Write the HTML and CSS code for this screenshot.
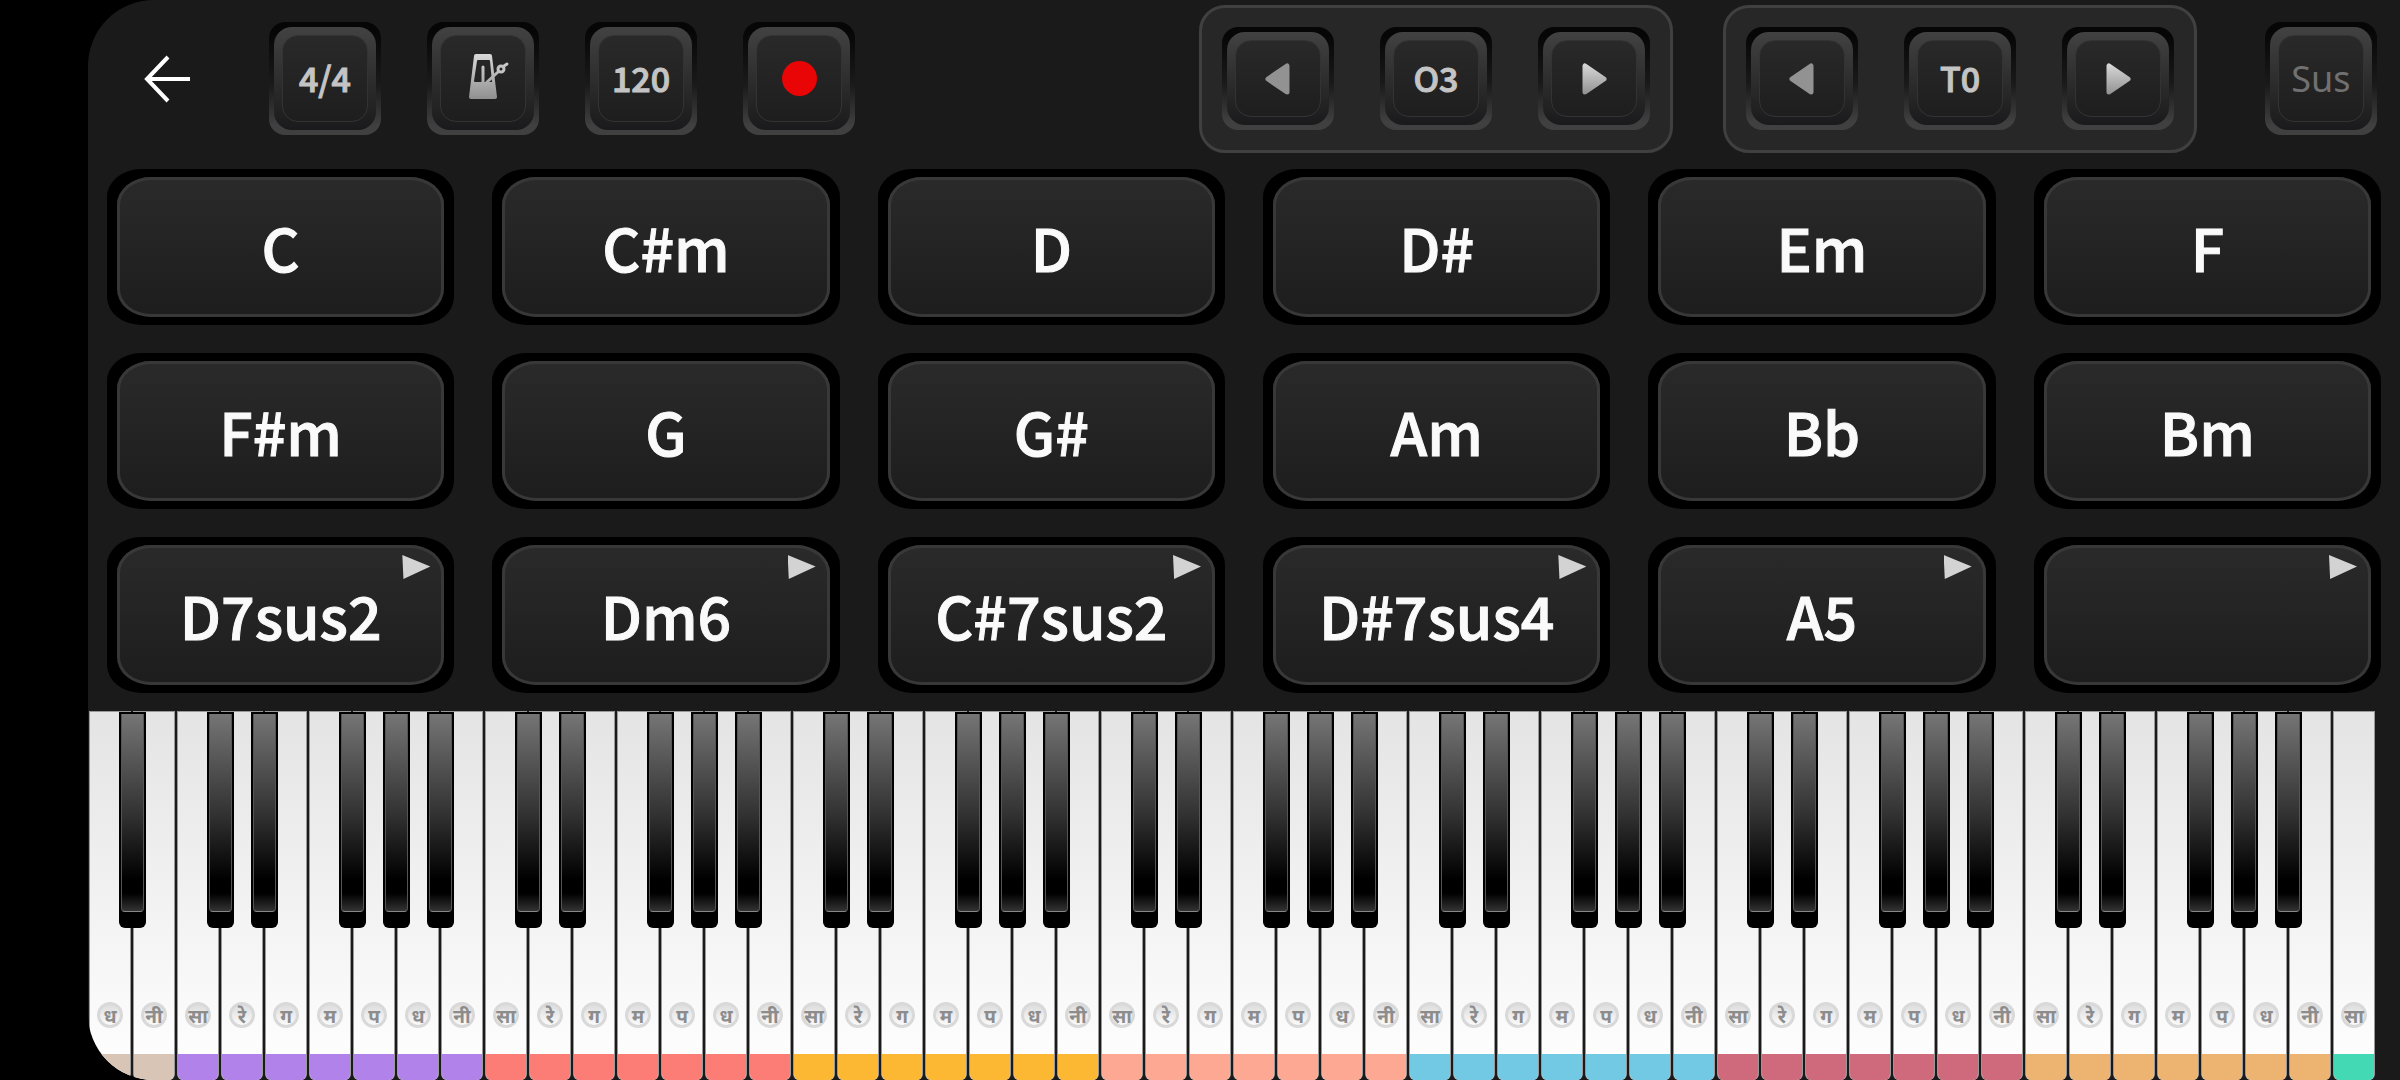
FILE: index.html
```
<!DOCTYPE html>
<html lang="en">
<head>
<meta charset="utf-8">
<title>Chord pads and piano</title>
<link rel="stylesheet" href="styles.css">
</head>
<body>
<main class="app">
  <header class="toolbar">
    <button class="back" aria-label="Back">
      <svg viewBox="0 0 48 48" width="48" height="48"><path d="M46 24H4M24 2L3 24l21 22" fill="none" stroke="#fff" stroke-width="4"/></svg>
    </button>
    <div class="tools">
      <button class="key-btn"><span class="cap"><span class="face text">4/4</span></span></button>
      <button class="key-btn" aria-label="Metronome"><span class="cap"><span class="face">
        <svg viewBox="-11 0 51 50" width="51" height="50">
          <defs><linearGradient id="metal" gradientUnits="userSpaceOnUse" x1="0" y1="0" x2="0" y2="46"><stop offset="0" stop-color="#dadada"/><stop offset="1" stop-color="#8e8e8e"/></linearGradient></defs>
          <path fill="url(#metal)" fill-rule="evenodd" d="M7 0h14q2 0 2 2l5 41q0 2-2 2H2q-2 0-2-2L5 2q0-2 2-2zM9 6Q8 6 8 7L5 27q0 1 1 1h17L21 7q0-1-1-1z"/>
          <path fill="none" stroke="url(#metal)" stroke-width="3" stroke-linecap="round" d="M14 13v15M18 28l11-10M35 12l3-2"/>
          <circle cx="32" cy="15" r="3" fill="none" stroke="#c4c4c4" stroke-width="3"/>
        </svg></span></span></button>
      <button class="key-btn"><span class="cap"><span class="face text">120</span></span></button>
      <button class="key-btn" aria-label="Record"><span class="cap"><span class="face"><span class="record"></span></span></span></button>
    </div>
    <div class="stepper">
      <button class="key-btn small" aria-label="Octave down"><span class="cap"><span class="face"><svg viewBox="0 0 26 32" width="26" height="32"><path d="M22 3v26L3 16z" fill="#929292" stroke="#929292" stroke-width="5" stroke-linejoin="round"/></svg></span></span></button>
      <button class="key-btn small"><span class="cap"><span class="face text">O3</span></span></button>
      <button class="key-btn small" aria-label="Octave up"><span class="cap"><span class="face"><svg viewBox="0 0 26 32" width="26" height="32"><path d="M4 3v26l19-13z" fill="url(#arrow)" stroke="url(#arrow)" stroke-width="5" stroke-linejoin="round"/><defs><linearGradient id="arrow" gradientUnits="userSpaceOnUse" x1="0" y1="0" x2="0" y2="32"><stop offset="0" stop-color="#dadada"/><stop offset="1" stop-color="#909090"/></linearGradient></defs></svg></span></span></button>
    </div>
    <div class="stepper">
      <button class="key-btn small" aria-label="Transpose down"><span class="cap"><span class="face"><svg viewBox="0 0 26 32" width="26" height="32"><path d="M22 3v26L3 16z" fill="#929292" stroke="#929292" stroke-width="5" stroke-linejoin="round"/></svg></span></span></button>
      <button class="key-btn small"><span class="cap"><span class="face text">T0</span></span></button>
      <button class="key-btn small" aria-label="Transpose up"><span class="cap"><span class="face"><svg viewBox="0 0 26 32" width="26" height="32"><path d="M4 3v26l19-13z" fill="url(#arrow)" stroke="url(#arrow)" stroke-width="5" stroke-linejoin="round"/></svg></span></span></button>
    </div>
    <button class="key-btn sustain"><span class="cap"><span class="face">Sus</span></span></button>
  </header>

  <section class="pads" aria-label="Chords">
    <button class="pad"><span class="pad-face">C</span></button>
    <button class="pad"><span class="pad-face">C#m</span></button>
    <button class="pad"><span class="pad-face">D</span></button>
    <button class="pad"><span class="pad-face">D#</span></button>
    <button class="pad"><span class="pad-face">Em</span></button>
    <button class="pad"><span class="pad-face">F</span></button>
    <button class="pad"><span class="pad-face">F#m</span></button>
    <button class="pad"><span class="pad-face">G</span></button>
    <button class="pad"><span class="pad-face">G#</span></button>
    <button class="pad"><span class="pad-face">Am</span></button>
    <button class="pad"><span class="pad-face">Bb</span></button>
    <button class="pad"><span class="pad-face">Bm</span></button>
    <button class="pad custom"><span class="pad-face">D7sus2</span></button>
    <button class="pad custom"><span class="pad-face">Dm6</span></button>
    <button class="pad custom"><span class="pad-face">C#7sus2</span></button>
    <button class="pad custom"><span class="pad-face">D#7sus4</span></button>
    <button class="pad custom"><span class="pad-face">A5</span></button>
    <button class="pad custom" aria-label="Empty chord"><span class="pad-face"></span></button>
  </section>

  <section class="piano" id="piano" aria-label="Piano"></section>
</main>
<script src="piano.js"></script>
</body>
</html>
```

FILE: piano.js
```
const notes = ["सा", "रे", "ग", "म", "प", "ध", "नी"];
const sharps = [true, true, false, true, true, true, false];
const piano = document.getElementById("piano");

// 52 white keys, starting from the sixth note of octave 0
for (let i = 0; i < 52; i++) {
  const step = (i + 5) % 7;
  const octave = Math.floor((i + 5) / 7);
  const slot = document.createElement("div");
  slot.className = "slot";

  const white = document.createElement("button");
  white.className = "white octave-" + octave;
  const label = document.createElement("span");
  label.className = "note";
  label.textContent = notes[step];
  white.append(label);
  slot.append(white);

  if (sharps[step] && i < 51) {
    const black = document.createElement("button");
    black.className = "black";
    black.setAttribute("aria-label", notes[step] + " sharp");
    slot.append(black);
  }
  piano.append(slot);
}
```

FILE: styles.css
```
* { box-sizing: border-box; }

body {
  margin: 0;
  background: #000;
  font-family: "Noto Sans CJK SC", "Noto Sans", sans-serif;
}

button {
  margin: 0;
  padding: 0;
  border: 0;
  background: none;
  color: inherit;
  font: inherit;
}

svg { display: block; }

.app {
  display: flex;
  flex-direction: column;
  min-height: 100vh;
  margin-left: 88px;
  background: #1a1a1a;
  border-radius: 66px 0 0 66px;
  overflow: hidden;
}

.toolbar {
  display: flex;
  align-items: center;
  height: 169px;
  padding: 0 23px 12px 56px;
}

.back { margin-right: 77px; }

.tools {
  display: flex;
  gap: 46px;
  margin-right: auto;
}

.key-btn {
  width: 112px;
  height: 113px;
  padding: 5px;
  border-radius: 16px;
  background: linear-gradient(#060606 8%, #1a1a1a 55%, #404040 92%);
  color: #c4c4c4;
  font-size: 34px;
  font-weight: 500;
  line-height: 40px;
}

.key-btn.small { height: 103px; }

.cap {
  display: block;
  height: 100%;
  padding: 8px;
  border-radius: 18px;
  background: linear-gradient(#424242, #2a2a2a 60%, #1a1a1c);
}

.face {
  display: flex;
  align-items: center;
  justify-content: center;
  height: 100%;
  border: 1px solid #333;
  border-radius: 16px;
  background: linear-gradient(#292929, #1e1e1e);
}

.text {
  padding-bottom: 2px;
  -webkit-text-stroke: 1px currentColor;
}

.record {
  width: 35px;
  height: 35px;
  border-radius: 50%;
  background: #e90505;
}

.stepper {
  display: flex;
  align-items: center;
  gap: 46px;
  height: 148px;
  margin-right: 50px;
  padding: 0 20px;
  border: 3px solid #404040;
  border-radius: 26px;
  background: #272727;
}

.sustain {
  margin-left: 18px;
  color: #707070;
  font-family: "Noto Sans", sans-serif;
  font-size: 36px;
  font-weight: 400;
}

.pads {
  display: grid;
  grid-template-columns: repeat(6, 1fr);
  grid-auto-rows: 156px;
  gap: 28px 38px;
  padding: 0 19px 18px;
}

.pad {
  position: relative;
  display: flex;
  padding: 8px 10px;
  border-radius: 34px / 28px;
  background: #000;
  color: #fafafa;
  font-size: 59px;
  font-weight: 500;
  line-height: 72px;
  -webkit-text-stroke: 1px currentColor;
}

.pad-face {
  display: flex;
  flex: 1;
  align-items: center;
  align-self: stretch;
  justify-content: center;
  border-radius: 34px / 28px;
  background: linear-gradient(#2a2a2a, #1d1d1d);
  box-shadow: inset 0 0 0 3px #383838;
}

.custom::after {
  content: "";
  position: absolute;
  top: 18px;
  right: 24px;
  width: 28px;
  height: 24px;
  background: #d3d3d3;
  clip-path: polygon(0 0, 100% 48%, 4% 100%);
}

.piano {
  display: flex;
  flex: 1;
  min-height: 369px;
  margin-right: 24px;
}

.slot {
  position: relative;
  display: flex;
  flex: 1;
  padding: 0 1px;
}

.white {
  display: flex;
  flex: 1;
  flex-direction: column;
  align-items: center;
  justify-content: flex-end;
  border: 1px solid #999;
  border-bottom: 0;
  border-radius: 0 0 6px 6px;
  background: linear-gradient(#e4e4e4, #fff);
  overflow: hidden;
}

.white::after {
  content: "";
  align-self: stretch;
  height: 26px;
  margin-top: 26px;
  background: var(--band);
}

.octave-0 { --band: #d8c5b6; }
.octave-1 { --band: #b082ea; }
.octave-2 { --band: #fc7c76; }
.octave-3 { --band: #fdb833; }
.octave-4 { --band: #fda892; }
.octave-5 { --band: #72c9e4; }
.octave-6 { --band: #cf697c; }
.octave-7 { --band: #edb370; }
.octave-8 { --band: #43d9b5; }

.note {
  display: flex;
  align-items: center;
  justify-content: center;
  width: 26px;
  height: 26px;
  border: 3px solid #d9d9d9;
  border-radius: 50%;
  background: linear-gradient(#dedede, #fafafa);
  color: #8c8c8c;
  font-size: 19px;
  font-weight: 700;
  line-height: 20px;
  white-space: nowrap;
}

.black {
  position: absolute;
  z-index: 1;
  top: 1px;
  right: -14px;
  width: 27px;
  height: 216px;
  padding: 2px 2px 17px;
  border-radius: 0 0 6px 6px;
  background: #000;
}

.black::before {
  content: "";
  display: block;
  height: 100%;
  border: 1px solid #555;
  border-top: 0;
  border-bottom-color: #888;
  border-radius: 0 0 4px 4px;
  background: linear-gradient(#757575, #333 50%, #000 84%, #000 91%, #333);
}
```
